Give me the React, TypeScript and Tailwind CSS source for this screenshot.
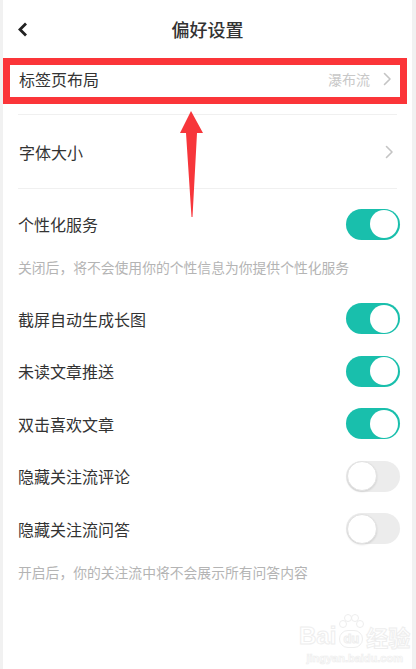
import React from "react";

const font = { fontFamily: '"Noto Sans CJK SC", "Noto Sans", sans-serif' };

function Chevron() {
  return (
    <svg width="9" height="14" viewBox="0 0 9 14" className="shrink-0">
      <path d="M1.5 1.5 L7 7 L1.5 12.5" fill="none" stroke="#c4c4c4" strokeWidth="1.6" strokeLinecap="round" strokeLinejoin="round" />
    </svg>
  );
}

function Toggle({ on }: { on: boolean }) {
  return on ? (
    <div className="w-[54px] h-[31px] rounded-full bg-[#19bfac] flex items-center justify-end pr-[2px]">
      <div className="w-[28px] h-[28px] rounded-full bg-white" />
    </div>
  ) : (
    <div className="w-[54px] h-[31px] rounded-full bg-[#ececec] flex items-center pl-[1px]">
      <div className="w-[30px] h-[30px] rounded-full bg-white border border-[#e2e2e2] shadow-[0_1px_2px_rgba(0,0,0,0.12)]" />
    </div>
  );
}

function ToggleRow({ label, on }: { label: string; on: boolean }) {
  return (
    <div className="h-[52.5px] flex items-center justify-between pl-[15px] pr-[12px]">
      <span className="text-[16px] text-[#333]">{label}</span>
      <Toggle on={on} />
    </div>
  );
}

export default function App() {
  return (
    <div className="w-[416px] h-[669px] bg-[#f1f1f1] overflow-hidden" style={font}>
      <div className="relative ml-[3px] mr-[4px] h-full bg-white">
        {/* header */}
        <div className="relative h-[58px] flex items-center justify-center">
          <svg width="10" height="15" viewBox="0 0 10 15" className="absolute left-[15px] top-[22px]">
            <path d="M8 1.5 L2 7.5 L8 13.5" fill="none" stroke="#222" strokeWidth="2.8" strokeLinejoin="miter" />
          </svg>
          <span className="text-[18px] font-medium text-[#333]">偏好设置</span>
        </div>

        {/* 标签页布局 */}
        <div className="relative">
          <div className="h-[42px] flex items-center justify-between pl-[16px] pr-[20px]">
            <span className="text-[16px] text-[#333]">标签页布局</span>
            <div className="flex items-center gap-[13px]">
              <span className="text-[14px] text-[#c8c8c8]">瀑布流</span>
              <Chevron />
            </div>
          </div>
          <div className="absolute left-0 top-0 w-[404px] h-[46px] border-[7px] border-[#fb3539]" />
          <div className="h-[14px]" />
        </div>
        <div className="mx-[15px] h-px bg-[#f0f0f0]" />

        {/* 字体大小 */}
        <div className="h-[73px] flex items-center justify-between pl-[16px] pr-[18px]">
          <span className="text-[16px] text-[#333]">字体大小</span>
          <Chevron />
        </div>
        <div className="mx-[15px] h-px bg-[#f0f0f0]" />

        <div className="pt-[9px]">
          <ToggleRow label="个性化服务" on />
        </div>
        <div className="h-[34px] flex items-center pl-[15px]">
          <span className="text-[13.8px] text-[#b4b4b4]">关闭后，将不会使用你的个性信息为你提供个性化服务</span>
        </div>
        <div className="pt-[8px]">
          <ToggleRow label="截屏自动生成长图" on />
          <ToggleRow label="未读文章推送" on />
          <ToggleRow label="双击喜欢文章" on />
          <ToggleRow label="隐藏关注流评论" on={false} />
          <ToggleRow label="隐藏关注流问答" on={false} />
        </div>
        <div className="h-[34px] flex items-center pl-[15px]">
          <span className="text-[13.8px] text-[#b4b4b4]">开启后，你的关注流中将不会展示所有问答内容</span>
        </div>

        {/* red arrow annotation */}
        <svg width="30" height="110" viewBox="0 0 30 110" className="absolute left-[174px] top-[110px]">
          <path d="M14 1 L26 23 L20 23 L15.5 107 L14.5 107 L9 23 L3 23 Z" fill="#f7363b" />
        </svg>

        {/* watermark */}
        <div className="absolute left-[296px] top-[614px] flex flex-col items-center">
          <div className="flex items-end">
            <span className="text-[24px] leading-[24px] font-bold text-white [-webkit-text-stroke:1px_#eeeeee]" style={{ fontFamily: '"Liberation Sans", sans-serif' }}>Bai</span>
            <div className="relative flex flex-col items-center mx-[1px]">
              <svg width="28" height="16" viewBox="0 0 28 16">
                <circle cx="6" cy="10" r="3.5" fill="none" stroke="#eeeeee" />
                <circle cx="11" cy="4" r="3.5" fill="none" stroke="#eeeeee" />
                <circle cx="18" cy="4" r="3.5" fill="none" stroke="#eeeeee" />
                <circle cx="23" cy="10" r="3.5" fill="none" stroke="#eeeeee" />
              </svg>
              <span className="text-[13px] leading-[16px] font-bold text-white [-webkit-text-stroke:1px_#eeeeee] rounded-full border border-[#eeeeee] px-[3px]" style={{ fontFamily: '"Liberation Sans", sans-serif' }}>du</span>
            </div>
            <span className="text-[22px] leading-[24px] font-bold text-white [-webkit-text-stroke:1px_#eeeeee]">经验</span>
          </div>
          <span className="text-[11px] leading-[14px] font-bold text-white [-webkit-text-stroke:0.7px_#eeeeee] mt-[3px]" style={{ fontFamily: '"Liberation Sans", sans-serif' }}>jingyan.baidu.com</span>
        </div>
      </div>
    </div>
  );
}
